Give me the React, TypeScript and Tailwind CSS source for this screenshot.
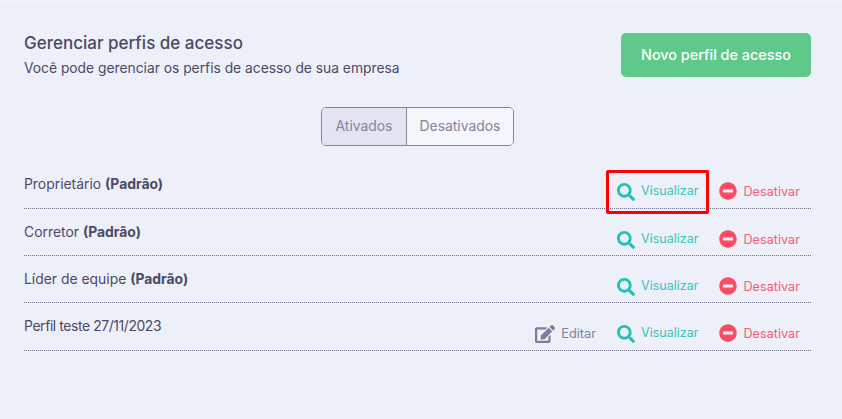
import { FaEdit, FaMinusCircle, FaSearch } from "react-icons/fa";

const profiles = [
  { name: "Proprietário", isDefault: true },
  { name: "Corretor", isDefault: true },
  { name: "Líder de equipe", isDefault: true },
  { name: "Perfil teste 27/11/2023", isDefault: false },
];

const App = () => {
  return (
    <div className="relative w-[842px] h-[419px] overflow-hidden bg-[#edf0f8] border-t-2 border-[#f1f3f9] font-['Inter','Open_Sans',sans-serif] text-[#4a4a68]">
      <div className="pl-6 pr-[31px]">
        {/* Header */}
        <div className="flex items-start justify-between pt-[31px]">
          <div>
            <h1 className="text-[17px] leading-[20px] font-medium">Gerenciar perfis de acesso</h1>
            <p className="text-[13.8px] leading-[18px] mt-[6px]">Você pode gerenciar os perfis de acesso de sua empresa</p>
          </div>
          <button className="w-[190px] h-[44px] rounded-[5px] bg-[#5fc98a] text-white text-[14.4px] font-medium">
            Novo perfil de acesso
          </button>
        </div>

        {/* Tabs */}
        <div className="flex justify-center mt-[30px]">
          <div className="flex h-[39px] w-[193px] rounded-[5px] border border-[#84849c] overflow-hidden text-[13.9px] text-[#84849c]">
            <div className="w-[85px] flex items-center justify-center bg-[#e2e5ef] border-r border-[#84849c]">Ativados</div>
            <div className="flex-1 flex items-center justify-center bg-[#f3f6fb]">Desativados</div>
          </div>
        </div>

        {/* Profile list */}
        <div className="mt-[15px]">
          {profiles.map((profile) => (
            <div
              key={profile.name}
              className="h-[47px] flex justify-between border-b border-dotted border-[#6e6e8a] first:h-[48px] last:h-[48px]"
            >
              <p className={`text-[13.9px] leading-[18px] pt-[15px] mt-[-1px] ${profile.isDefault ? "" : "tracking-[-0.4px]"}`}>
                {profile.name} {profile.isDefault && <strong className="font-bold">(Padrão)</strong>}
              </p>
              <div className="flex items-center gap-[21px] pr-[11px] pt-[15px] text-[12.5px] h-[46px]">
                {!profile.isDefault && (
                  <span className="flex items-center gap-[6px] text-[#84849c] text-[12.8px]">
                    <FaEdit className="text-[20px] text-[#7c7c98]" />
                    Editar
                  </span>
                )}
                <span className="flex items-center gap-[6px] text-[#36c5ba]">
                  <FaSearch className="text-[18px] text-[#22c1b5]" />
                  Visualizar
                </span>
                <span className="flex items-center gap-[6px] text-[#fb5a72] text-[12.7px]">
                  <FaMinusCircle className="text-[18px] text-[#fb4c66]" />
                  Desativar
                </span>
              </div>
            </div>
          ))}
        </div>
      </div>

      {/* Highlight annotation */}
      <div className="absolute left-[606px] top-[168px] w-[103px] h-[44px] border-[3px] border-[#ff0000] rounded-[2px]" />
    </div>
  );
};

export default App;
